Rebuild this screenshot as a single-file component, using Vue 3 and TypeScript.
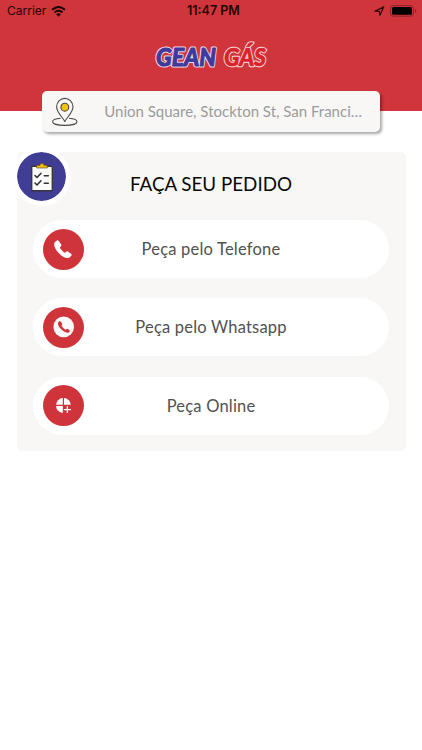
<script setup lang="ts">
type IconName = 'phone' | 'whatsapp' | 'online'

interface OrderOption {
  label: string
  icon: IconName
}

const address = 'Union Square, Stockton St, San Franci…'

const options: OrderOption[] = [
  { label: 'Peça pelo Telefone', icon: 'phone' },
  { label: 'Peça pelo Whatsapp', icon: 'whatsapp' },
  { label: 'Peça Online', icon: 'online' },
]
</script>

<template>
  <div class="screen">
    <header class="header">
      <div class="status">
        <div class="status-left">
          <span class="carrier">Carrier</span>
          <svg class="wifi" viewBox="0 0 16 12" width="15" height="11">
            <path d="M1 4.2Q8-2 15 4.2" fill="none" stroke="#160304" stroke-width="2.2" />
            <path d="M3.6 7Q8 3.2 12.4 7" fill="none" stroke="#160304" stroke-width="2.1" />
            <path d="M5.5 9Q8 6.9 10.5 9L8 11.7z" fill="#160304" />
          </svg>
        </div>
        <span class="clock">11:47 PM</span>
        <div class="status-right">
          <svg viewBox="0 0 11 11" width="11" height="11">
            <path d="M1 5.2L9.8 .7L5.9 9.3L5.4 5.3z" fill="none" stroke="#2a0507" stroke-width="1.2" stroke-linejoin="round" />
          </svg>
          <svg viewBox="0 0 27 12" width="27" height="12">
            <rect x=".5" y=".6" width="23" height="10.6" rx="2.8" fill="none" stroke="#8a2228" />
            <rect x="2" y="2.1" width="20" height="7.6" rx="1.5" fill="#000" />
            <path d="M25 4v3.8q1.4-.5 1.4-1.9T25 4z" fill="#8a2228" />
          </svg>
        </div>
      </div>
      <svg class="logo" viewBox="0 0 120 36" width="120" height="36">
        <g class="logo-text">
          <text x="5" y="27" textLength="60" lengthAdjust="spacingAndGlyphs" class="logo-halo">GEAN</text>
          <text x="5" y="27" textLength="60" lengthAdjust="spacingAndGlyphs" class="logo-blue" aria-hidden="true">GEAN</text>
          <text x="73" y="27" textLength="42" lengthAdjust="spacingAndGlyphs" class="logo-outline">GÁS</text>
          <text x="73" y="27" textLength="42" lengthAdjust="spacingAndGlyphs" class="logo-red" aria-hidden="true">GÁS</text>
        </g>
      </svg>
    </header>

    <div class="address">
      <svg class="pin" viewBox="0 0 28 30" width="28" height="30">
        <g fill="none" stroke="#4a4a4a" stroke-width="1.1" stroke-linejoin="round">
          <path d="M9.6 21.3C4.8 21.7 1.6 23 1.6 24.7C1.6 26.9 7 28.4 13.8 28.4S26 26.9 26 24.7C26 23 22.8 21.7 18 21.3" />
          <path d="M13.8 24.6C11.6 19.8 5.6 15.8 5.6 9.8A8.2 8.4 0 0 1 22 9.8C22 15.8 16 19.8 13.8 24.6z" />
          <circle cx="13.8" cy="10.2" r="3.9" fill="#f5c400" />
        </g>
      </svg>
      <span class="address-text">{{ address }}</span>
    </div>

    <main class="card">
      <div class="badge">
        <svg viewBox="0 0 24 30" width="24" height="30">
          <rect x="1.7" y="4.2" width="20.6" height="24.6" rx=".8" fill="#fafafa" stroke="#37363a" stroke-width="1.4" />
          <path d="M6.7 6V3.3H10a2 2 0 0 1 4 0h3.3V6z" fill="#f5bd13" stroke="#4b4226" stroke-width=".6" />
          <g fill="none" stroke="#333" stroke-width="1.6" stroke-linecap="round" stroke-linejoin="round">
            <path d="M5 13.5l2 2l4-4.2M14.3 13.7h4M5 21l2 2l4-4.2M14.3 21.2h4" />
          </g>
        </svg>
      </div>
      <h1 class="title">FAÇA SEU PEDIDO</h1>
      <div class="options">
        <button v-for="option in options" :key="option.icon" class="option" :class="option.icon" type="button">
          <span class="disc">
            <svg v-if="option.icon === 'phone'" viewBox="0 0 24 24" width="24" height="24">
              <path
                d="M5.8 3.2L3.7 5C2.1 8 4.2 12.3 7.9 16.1C11.7 19.9 15.7 21.9 18.5 20.3L20.5 18.3Q21 17.5 20.3 16.8L16.9 14.2Q16.2 13.7 15.5 14.3L14 15.6Q13.3 15.8 11 13.4Q8.7 11 8.9 10.3L10.1 8.8Q10.6 8.1 10.2 7.4L7.6 3.5Q6.8 2.6 5.8 3.2z"
                fill="#fff"
                transform="translate(-1 .2)"
              />
            </svg>
            <svg v-else-if="option.icon === 'whatsapp'" viewBox="0 0 22 22" width="22" height="22">
              <circle cx="10.7" cy="10.9" r="10.3" fill="#fafafa" />
              <path
                d="M6.3 5.2L5.2 6.2C4.4 7.6 5.3 10.4 8.2 13.3C11.1 16.2 14.2 17.3 15.8 16.4L17 15.1Q17.2 14.7 16.8 14.4L14.5 12.8Q14.1 12.6 13.7 12.9L12.8 13.6Q12.2 13.7 10.3 11.9T8.5 9.3L9.2 8.4Q9.4 8 9.2 7.6L7.3 5.3Q6.9 4.8 6.3 5.2z"
                fill="#cf343a"
              />
            </svg>
            <svg v-else viewBox="0 0 18 18" width="18" height="18">
              <g fill="#fff" transform="translate(-.3 -.4)">
                <path d="M8.1 1.5V8.2H1.3A7.2 7.2 0 0 1 8.1 1.5z" />
                <path d="M9.3 1.5A7.2 7.2 0 0 1 16.2 8.2H9.3z" />
                <path d="M1.3 9.5H8.1V16.3A7.2 7.2 0 0 1 1.3 9.5z" />
                <path d="M12 9.6h1.3v2.8h2.9v1.3h-2.9v2.8H12v-2.8H9.1v-1.3H12z" />
              </g>
            </svg>
          </span>
          <span class="label">{{ option.label }}</span>
        </button>
      </div>
    </main>
  </div>
</template>

<style>
body {
  background: #fff;
}
</style>

<style scoped>
.screen {
  width: 422px;
  min-height: 750px;
  background: #fff;
  font-family: Lato, 'Open Sans', sans-serif;
}
.header {
  height: 111px;
  background: #cf353b;
  display: flex;
  flex-direction: column;
  align-items: center;
}
.status {
  width: 100%;
  height: 22px;
  box-sizing: border-box;
  padding: 0 5px 0 7px;
  display: grid;
  grid-template-columns: 180px auto 1fr;
  align-items: center;
  font: 12.5px/22px Inter, 'Liberation Sans', sans-serif;
  color: #240507;
}
.status-left {
  display: flex;
  align-items: center;
  gap: 5px;
}
.carrier {
  font-size: 12px;
}
.clock {
  font-weight: 600;
}
.status-right {
  display: flex;
  align-items: center;
  justify-content: flex-end;
  gap: 5px;
}
.logo {
  margin-top: 17px;
}
.logo-text {
  font: italic 900 24px Lato, sans-serif;
  stroke-linejoin: round;
}
.logo-halo {
  fill: #f1dce8;
  stroke: #f1dce8;
  stroke-width: 3px;
}
.logo-blue {
  fill: #3d3a9b;
  stroke: #3d3a9b;
  stroke-width: 1px;
}
.logo-outline {
  fill: #fbe3e3;
  stroke: #fbe3e3;
  stroke-width: 2.6px;
}
.logo-red {
  fill: #d9232b;
  stroke: #d9232b;
  stroke-width: 0.7px;
}
.address {
  width: 338px;
  height: 41px;
  margin: -20px 0 0 42px;
  box-sizing: border-box;
  padding: 0 18px 0 9px;
  display: flex;
  align-items: center;
  justify-content: space-between;
  background: #f8f7f6;
  border-radius: 5px;
  box-shadow: 2px 2px 3px rgba(0, 0, 0, 0.35);
  position: relative;
}
.address-text {
  padding-bottom: 2px;
  font-size: 15px;
  line-height: 20px;
  color: #9b9b9b;
  white-space: nowrap;
}
.card {
  position: relative;
  width: 389px;
  height: 299px;
  margin: 20px 0 0 17px;
  box-sizing: border-box;
  padding: 20px 17px 0 16px;
  background: #f8f7f6;
  border-radius: 5px;
}
.badge {
  position: absolute;
  left: -4px;
  top: -4px;
  width: 49px;
  height: 49px;
  border: 4.5px solid #fff;
  border-radius: 50%;
  background: #403d94;
  background-clip: padding-box;
  outline: 0.5px solid #fff;
  display: flex;
  align-items: center;
  justify-content: center;
}
.title {
  margin: 0;
  font-size: 18.8px;
  font-weight: 400;
  line-height: 24px;
  text-align: center;
  color: #080808;
}
.options {
  margin-top: 24px;
  display: flex;
  flex-direction: column;
  gap: 20.3px;
}
.option {
  width: 356px;
  height: 58px;
  border: 0;
  padding: 0 10px;
  border-radius: 29px;
  background: #fff;
  display: grid;
  grid-template-columns: 41px 1fr 41px;
  align-items: center;
  font-family: inherit;
}
.disc {
  width: 41px;
  height: 41px;
  border-radius: 50%;
  background: #cf343a;
  display: flex;
  align-items: center;
  justify-content: center;
}
.label {
  font-size: 16.5px;
  line-height: 22px;
  letter-spacing: 0.2px;
  color: #515151;
  text-align: center;
}
</style>
